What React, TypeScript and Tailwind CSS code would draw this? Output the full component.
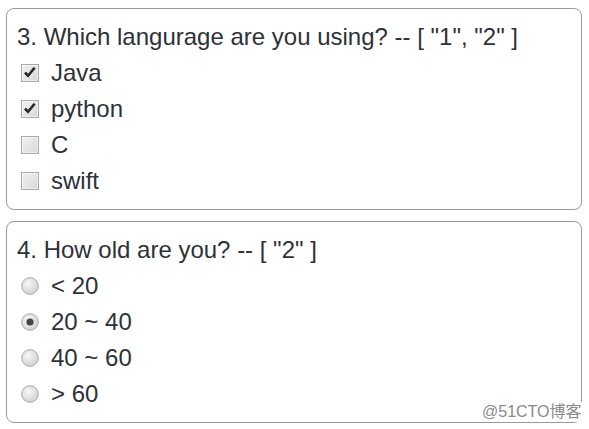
import React from "react";

const font = { fontFamily: '"Liberation Sans", Arial, sans-serif' };

function Check({ checked }: { checked?: boolean }) {
  return (
    <svg width="18" height="18" viewBox="0 0 18 18" className="shrink-0">
      <defs>
        <linearGradient id="cbg" x1="0" y1="0" x2="1" y2="1">
          <stop offset="0" stopColor="#f2f2f2" />
          <stop offset="1" stopColor="#d6d6d6" />
        </linearGradient>
      </defs>
      <rect x="0.5" y="0.5" width="17" height="17" fill="url(#cbg)" stroke="#a9a9a9" />
      <rect x="1.5" y="1.5" width="15" height="15" fill="none" stroke="#ffffff" strokeOpacity="0.5" />
      {checked && (
        <path d="M3.5 9.5 L7 13.2 L14.2 4.5 L12.6 3.4 L7 10.4 L5 8 Z" fill="#222" stroke="#222" strokeWidth="0.8" strokeLinejoin="round" />
      )}
    </svg>
  );
}

function Radio({ checked }: { checked?: boolean }) {
  return (
    <svg width="18" height="18" viewBox="0 0 18 18" className="shrink-0">
      <defs>
        <radialGradient id="rbg" cx="0.4" cy="0.35" r="0.7">
          <stop offset="0" stopColor="#f7f7f7" />
          <stop offset="1" stopColor="#d0d0d0" />
        </radialGradient>
      </defs>
      <circle cx="9" cy="9" r="8.3" fill="url(#rbg)" stroke="#a8a8a8" strokeWidth="1" />
      {checked && <circle cx="9" cy="9" r="3.6" fill="#444" />}
    </svg>
  );
}

function Row({ children, control }: { children: React.ReactNode; control: React.ReactNode }) {
  return (
    <div className="flex h-[36px] items-center pl-[4px]">
      {control}
      <span className="ml-[12px]">{children}</span>
    </div>
  );
}

export default function App() {
  return (
    <div className="relative w-[589px] h-[429px] bg-white text-[24px] leading-[36px] text-[#2e3138]" style={font}>
      <div className="pt-[8px] pl-[6px] pr-[7px]">
        <div className="rounded-[8px] border border-[#9a9a9a] pt-[10px] pb-[10px] pl-[10px]">
          <div>3. Which langurage are you using? -- [ "1", "2" ]</div>
          <Row control={<Check checked />}>Java</Row>
          <Row control={<Check checked />}>python</Row>
          <Row control={<Check />}>C</Row>
          <Row control={<Check />}>swift</Row>
        </div>
        <div className="mt-[11px] rounded-[8px] border border-[#9a9a9a] pt-[10px] pb-[10px] pl-[10px]">
          <div>4. How old are you? -- [ "2" ]</div>
          <Row control={<Radio />}>&lt; 20</Row>
          <Row control={<Radio checked />}>20 ~ 40</Row>
          <Row control={<Radio />}>40 ~ 60</Row>
          <Row control={<Radio />}>&gt; 60</Row>
        </div>
      </div>
      <div className="absolute left-[480px] top-[402px] bg-white pl-[2px] pr-[6px] text-[16px] leading-[20px] text-[#8a8a8a]" style={{ fontFamily: '"Liberation Sans", "Noto Sans CJK SC", sans-serif' }}>
        @51CTO博客
      </div>
    </div>
  );
}
